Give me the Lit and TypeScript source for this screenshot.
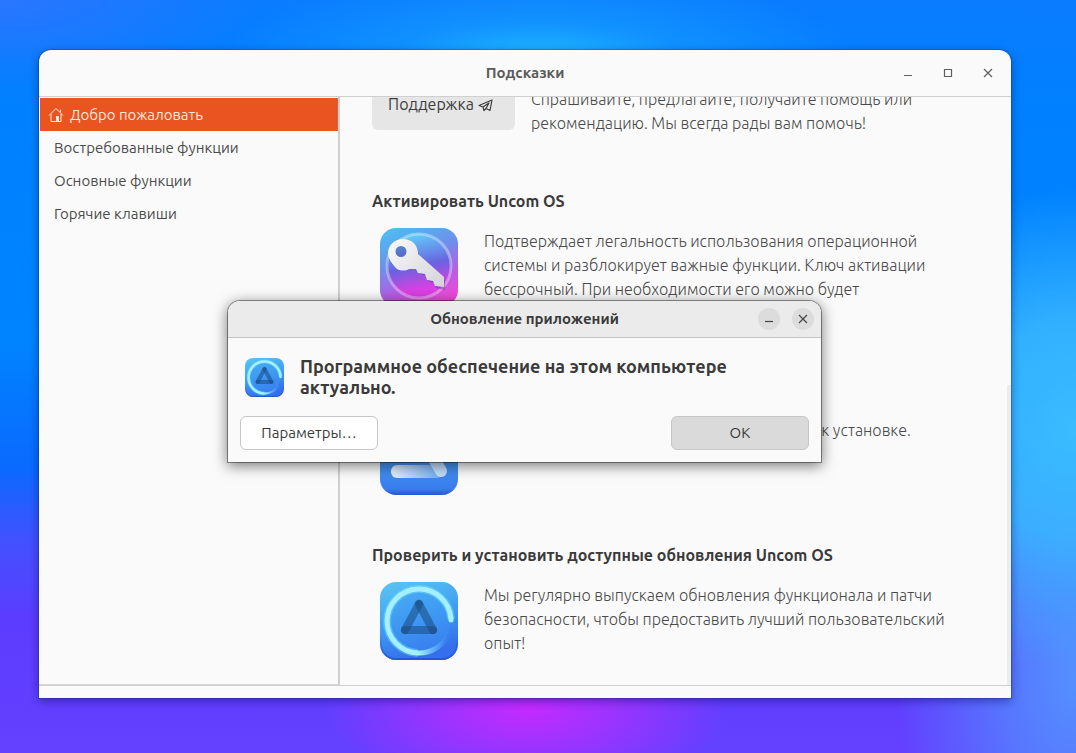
import { LitElement, html, css } from "lit";
import { customElement } from "lit/decorators.js";

const updateIcon = (id: string) => html`
  <svg class="app-icon" viewBox="0 0 78 78" aria-hidden="true">
    <defs>
      <linearGradient id="${id}-bg" x1="0" y1="0" x2="0.3" y2="1">
        <stop offset="0" stop-color="#5cc6f2" />
        <stop offset="0.45" stop-color="#44a6f2" />
        <stop offset="1" stop-color="#3470ee" />
      </linearGradient>
      <linearGradient id="${id}-rim" x1="0" y1="0" x2="0" y2="1">
        <stop offset="0.7" stop-color="#1d4fc8" stop-opacity="0" />
        <stop offset="1" stop-color="#1d4fc8" stop-opacity="0.7" />
      </linearGradient>
      <linearGradient id="${id}-ring" gradientUnits="userSpaceOnUse" x1="38" y1="70" x2="66" y2="58">
        <stop offset="0" stop-color="#a4f0ff" />
        <stop offset="1" stop-color="#5cc0ff" stop-opacity="0.1" />
      </linearGradient>
    </defs>
    <rect width="78" height="78" rx="16" fill="url(#${id}-bg)" />
    <rect x="1" y="1" width="76" height="76" rx="15" fill="none" stroke="url(#${id}-rim)" stroke-width="2" />
    <circle cx="39" cy="39" r="32" fill="#3d94f4" fill-opacity="0.4" />
    <g fill="none">
      <path d="M71 37A32 32 0 1 0 38 71" stroke="#6be0ff" stroke-opacity="0.45" stroke-width="8" />
      <path d="M71 37A32 32 0 1 0 38 71" stroke="#a4f0ff" stroke-width="5" />
      <path d="M38 71A32 32 0 0 0 67 55" stroke="url(#${id}-ring)" stroke-width="5" />
      <path d="M71 37V38" stroke="#a4f0ff" stroke-width="5" stroke-linecap="round" />
    </g>
    <g stroke="#17497f" stroke-opacity="0.55" stroke-width="8" stroke-linecap="round">
      <path d="M39 22L25 48" /><path d="M39 22L53 48" /><path d="M25 48H53" />
    </g>
  </svg>
`;

const keyIcon = html`
  <svg class="app-icon" viewBox="0 0 78 78" aria-hidden="true">
    <defs>
      <linearGradient id="key-bg" x1="0.2" y1="0" x2="0.6" y2="1">
        <stop offset="0" stop-color="#4cbcf2" />
        <stop offset="0.4" stop-color="#6f8eea" />
        <stop offset="0.75" stop-color="#b95ce4" />
        <stop offset="1" stop-color="#f04ad8" />
      </linearGradient>
      <linearGradient id="key-disc" x1="0.4" y1="0" x2="0.6" y2="1">
        <stop offset="0" stop-color="#5fd0f8" />
        <stop offset="0.5" stop-color="#6a62e0" />
        <stop offset="0.85" stop-color="#d940e2" />
      </linearGradient>
      <linearGradient id="key-metal" x1="0" y1="0" x2="1" y2="1">
        <stop offset="0" stop-color="#fafafa" />
        <stop offset="1" stop-color="#d3d3da" />
      </linearGradient>
    </defs>
    <rect width="78" height="78" rx="16" fill="url(#key-bg)" />
    <circle cx="39" cy="38" r="32" fill="url(#key-disc)" stroke="#ffffff" stroke-opacity="0.35" stroke-width="3" />
    <path transform="translate(1 3)" fill="#3b2f8c" fill-opacity="0.35"
      d="M23 11c8 0 14 5 15 13v4l26 21v10l-9-2-2-5-6-2-2-6-6-1-2-5-7-2c-3 3-8 4-12 2C11 35 8 30 8 25c0-8 7-14 15-14z" />
    <path fill="url(#key-metal)" fill-rule="evenodd"
      d="M23 11c8 0 14 5 15 13v2l26 23v10l-9-1-2-5-6-1-2-6-7-1-2-4-7 0c-3 2-8 2-12 0C11 35 8 30 8 25c0-8 7-14 15-14zM21 18a5.500 5.500 0 1 0 0 11a5.500 5.500 0 0 0 0-11z" />
  </svg>
`;

const storeIcon = html`
  <svg class="app-icon" viewBox="0 0 78 78" aria-hidden="true">
    <defs>
      <linearGradient id="store-bg" x1="0" y1="0" x2="0" y2="1">
        <stop offset="0" stop-color="#55c3f8" />
        <stop offset="0.92" stop-color="#3a7cee" />
        <stop offset="1" stop-color="#2558cf" />
      </linearGradient>
      <linearGradient id="store-bar" x1="0" y1="0" x2="1" y2="0">
        <stop offset="0" stop-color="#e6f3ff" />
        <stop offset="0.85" stop-color="#7ab4f8" />
      </linearGradient>
    </defs>
    <rect width="78" height="78" rx="16" fill="url(#store-bg)" />
    <rect x="11" y="48" width="52" height="13" rx="6" fill="url(#store-bar)" />
    <path d="M39 16L61 54" stroke="#c3dffd" stroke-width="12" stroke-linecap="round" />
  </svg>
`;

const minimizeGlyph = html`<svg class="glyph" viewBox="0 0 10 10" aria-hidden="true"><path d="M1 7.500H9" /></svg>`;
const maximizeGlyph = html`<svg class="glyph" viewBox="0 0 10 10" aria-hidden="true"><path d="M1.500 1.500H8.500V8.500H1.500Z" /></svg>`;
const closeGlyph = html`<svg class="glyph" viewBox="0 0 10 10" aria-hidden="true"><path d="M1 1L9 9M9 1L1 9" /></svg>`;

const base = css`
  * { box-sizing: border-box; }
  h1, h2, p { margin: 0; }
  button { font: inherit; color: inherit; border: 0; background: none; padding: 0; }
  svg { display: block; flex: none; }
  .glyph { width: 10px; height: 10px; fill: none; stroke: #444444; stroke-width: 1.200; }
`;

@customElement("hints-window")
export class HintsWindow extends LitElement {
  static styles = [base, css`
    :host {
      display: flex; flex-direction: column; min-height: 0;
      background: #fafafa; border-radius: 12px 12px 0 0; overflow: hidden;
      box-shadow: 0 0 0 1px rgba(0, 40, 110, 0.25), 0 3px 10px rgba(0, 10, 70, 0.45);
    }
    .titlebar {
      display: grid; grid-template-columns: 1fr auto 1fr; align-items: center;
      height: 47px; flex: none; border-bottom: 1px solid #cfcfcf; padding: 0 12px;
    }
    .title { grid-column: 2; font-size: 15px; line-height: 20px; font-weight: 700; color: #5c5c5c; }
    .controls { display: flex; justify-content: flex-end; gap: 18px; }
    .controls button { width: 22px; height: 22px; display: grid; place-items: center; }
    .controls .glyph { stroke: #606060; }
    .body { flex: 1; min-height: 0; display: flex; border-bottom: 1px solid #cfcfcf; margin-bottom: 12px; }
    .sidebar { width: 301px; flex: none; border-right: 2px solid #cfcfcf; border-bottom: 1px solid #d6d6d6; padding: 1px 0 0 1px; }
    .item {
      display: flex; align-items: center; gap: 6px; height: 33px; padding: 0 14px;
      font-size: 15px; color: #4c4c4c; text-decoration: none;
    }
    .item.active { background: #e95420; color: #ffe9df; padding: 0 8px; border-right: 1px solid #d0673f; }
    .house { width: 16px; height: 16px; fill: none; stroke: currentColor; stroke-width: 1; }
    .content {
      flex: 1; min-width: 0; display: flex; flex-direction: column; justify-content: flex-end; gap: 48px;
      overflow: hidden; padding: 0 60px 25px 32px; border-right: 4px solid transparent;
      border-image: linear-gradient(transparent 49%, #ececec 49%) 1;
      color: #4a4a4a; font-size: 16px; line-height: 24px;
    }
    .section { display: flex; flex-direction: column; gap: 15px; flex: none; }
    .section h2 { font-size: 16px; line-height: 24px; font-weight: 700; color: #3a3a3a; }
    .row { display: flex; align-items: flex-start; }
    .row .app-icon { width: 78px; height: 78px; margin: 0 26px 0 8px; }
    .row p { padding: 1px 0 5px; font-weight: 300; flex: 1; }
    .row.support { align-items: flex-end; gap: 16px; padding-bottom: 1px; }
    .support button {
      width: 143px; height: 52px; margin-bottom: 10px; flex: none; border-radius: 6px; background: #e6e6e6;
      display: flex; align-items: center; justify-content: center; gap: 4px; padding-right: 6px; color: #3d3d3d;
    }
    .plane { width: 15px; height: 15px; fill: none; stroke: currentColor; stroke-width: 1.200; stroke-linejoin: round; }
  `];

  render() {
    return html`
      <header class="titlebar">
        <h1 class="title">Подсказки</h1>
        <div class="controls">
          <button aria-label="Свернуть">${minimizeGlyph}</button>
          <button aria-label="Развернуть">${maximizeGlyph}</button>
          <button aria-label="Закрыть">${closeGlyph}</button>
        </div>
      </header>
      <div class="body">
        <nav class="sidebar">
          <a class="item active" href="#welcome">
            <svg class="house" viewBox="0 0 16 16" aria-hidden="true">
              <path d="M1 8.500L8 1.500L15 8.500M12.500 5.500V2.500M3 7V14.500H13V7" />
              <path d="M8 9H11V14.500H8Z" fill="currentColor" stroke="none" />
            </svg>
            <span>Добро пожаловать</span>
          </a>
          <a class="item" href="#popular">Востребованные функции</a>
          <a class="item" href="#basic">Основные функции</a>
          <a class="item" href="#hotkeys">Горячие клавиши</a>
        </nav>
        <main class="content">
          <section class="section">
            <div class="row support">
              <button>
                <span>Поддержка</span>
                <svg class="plane" viewBox="0 0 15 15" aria-hidden="true">
                  <path d="M1 8.500L14 3L12 13.500L8 11.500L6 13.500L5 10Z M5 10L11 6L8 11.500" />
                </svg>
              </button>
              <p>Спрашивайте, предлагайте, получайте помощь или рекомендацию. Мы всегда рады вам помочь!</p>
            </div>
          </section>
          <section class="section">
            <h2>Активировать Uncom OS</h2>
            <div class="row">
              ${keyIcon}
              <p>Подтверждает легальность использования операционной системы и разблокирует важные функции. Ключ активации бессрочный. При необходимости его можно будет восстановить на другом компьютере.</p>
            </div>
          </section>
          <section class="section">
            <h2>Установить приложения</h2>
            <div class="row">
              ${storeIcon}
              <p>Здесь собраны приложения, которые готовы к установке.</p>
            </div>
          </section>
          <section class="section">
            <h2>Проверить и установить доступные обновления Uncom OS</h2>
            <div class="row">
              ${updateIcon("update")}
              <p>Мы регулярно выпускаем обновления функционала и патчи безопасности, чтобы предоставить лучший пользовательский опыт!</p>
            </div>
          </section>
        </main>
      </div>
    `;
  }
}

@customElement("update-dialog")
export class UpdateDialog extends LitElement {
  static styles = [base, css`
    :host {
      display: block; background: #fafafa; border-radius: 12px 12px 0 0; color: #3a3a3a;
      box-shadow: 0 0 0 1px rgba(0, 0, 0, 0.4), 0 3px 14px 1px rgba(0, 0, 0, 0.5);
    }
    .titlebar {
      display: grid; grid-template-columns: 1fr auto 1fr; align-items: center; height: 37px;
      padding: 0 7px; background: #ebebeb; border-bottom: 1px solid #c4c4c4; border-radius: 12px 12px 0 0;
    }
    .title { grid-column: 2; font-size: 15px; line-height: 20px; font-weight: 700; }
    .controls { display: flex; justify-content: flex-end; gap: 12px; }
    .controls button { width: 22px; height: 22px; border-radius: 50%; background: #dcdcdc; display: grid; place-items: center; }
    .message { display: flex; align-items: center; gap: 16px; padding: 18px 80px 18px 17px; }
    .message .app-icon { width: 39px; height: 39px; }
    .message p { font-size: 18px; line-height: 21px; font-weight: 700; }
    .actions { display: flex; justify-content: space-between; padding: 0 12px 12px; }
    .actions button {
      width: 138px; height: 34px; padding-bottom: 2px; border: 1px solid #c6c6c6; border-radius: 6px;
      background: #ffffff; font-size: 15px;
    }
    .actions .primary { background: #dadada; }
  `];

  render() {
    return html`
      <header class="titlebar">
        <h2 class="title">Обновление приложений</h2>
        <div class="controls">
          <button aria-label="Свернуть">${minimizeGlyph}</button>
          <button aria-label="Закрыть">${closeGlyph}</button>
        </div>
      </header>
      <div class="message">
        ${updateIcon("dialog")}
        <p>Программное обеспечение на этом компьютере актуально.</p>
      </div>
      <div class="actions">
        <button>Параметры…</button>
        <button class="primary">ОК</button>
      </div>
    `;
  }
}

@customElement("app-root")
export class AppRoot extends LitElement {
  static styles = css`
    :host {
      display: flex; position: relative; box-sizing: border-box; height: 100vh; padding: 50px 65px 55px 39px;
      font-family: Ubuntu, "Noto Sans", "Open Sans", sans-serif;
      background:
        radial-gradient(ellipse 200px 90px at 49% 94%, #c42aff 0%, rgba(184, 46, 255, 0.7) 40%, rgba(150, 56, 255, 0) 100%),
        radial-gradient(ellipse 320px 90px at 50% 8%, #20b8ff 0%, rgba(24, 160, 255, 0.55) 45%, rgba(10, 130, 255, 0) 100%),
        radial-gradient(ellipse 260px 90px at 0% 0%, #2a76ff 0%, rgba(42, 118, 255, 0) 100%),
        radial-gradient(ellipse 240px 240px at 100% 57%, #3abcff 0%, rgba(58, 184, 255, 0.85) 45%, rgba(40, 160, 255, 0) 100%),
        radial-gradient(ellipse 180px 300px at 100% 90%, #5490ff 0%, rgba(84, 136, 255, 0.75) 40%, rgba(84, 110, 255, 0) 100%),
        linear-gradient(180deg, #0a7cff 0%, #0080ff 14%, #0084ff 45%, #0a6aff 62%, #4450ff 72%, #5c3cff 82%, #6440ff 100%);
    }
    hints-window { flex: 1; min-width: 0; }
    update-dialog { position: absolute; left: 228px; top: 301px; width: 593px; }
  `;

  render() {
    return html`
      <hints-window></hints-window>
      <update-dialog role="dialog" aria-label="Обновление приложений"></update-dialog>
    `;
  }
}
